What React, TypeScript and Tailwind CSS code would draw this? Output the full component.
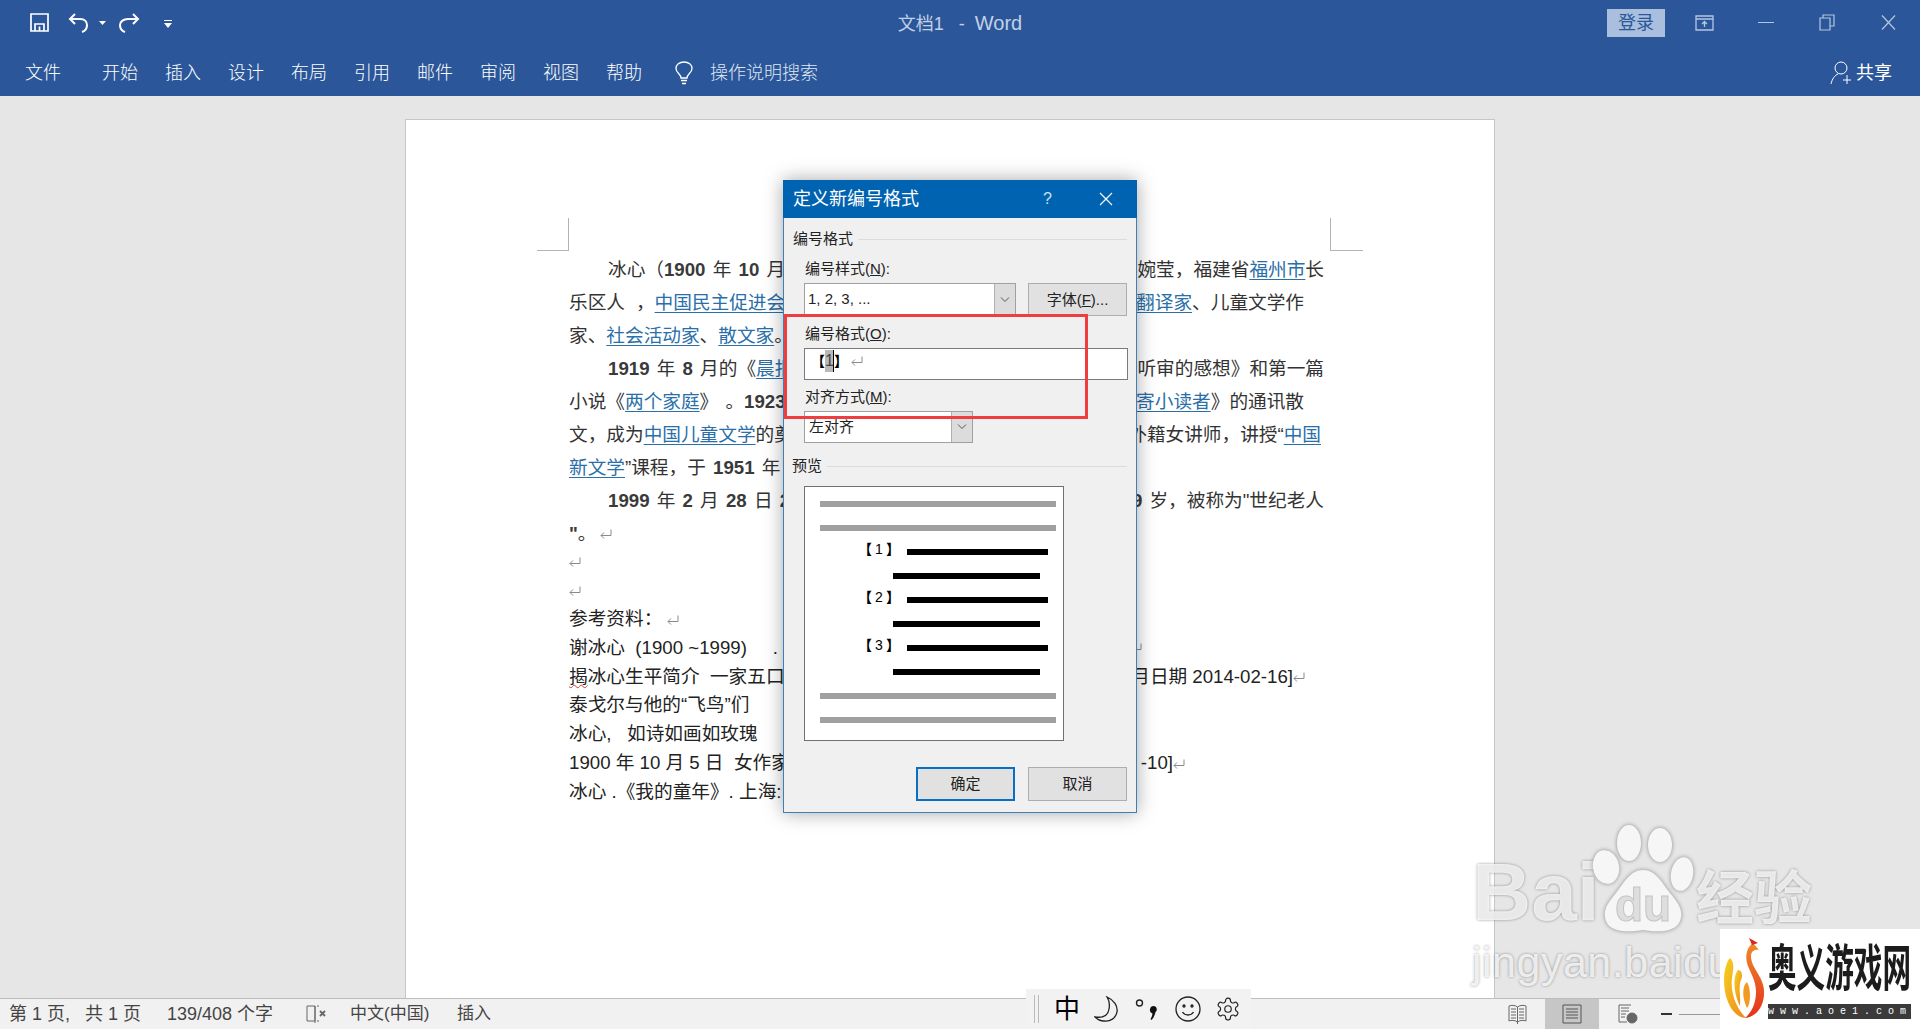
const tabs = ["开始", "插入", "设计", "布局", "引用", "邮件", "审阅", "视图", "帮助"];

function Ret({ className = "" }: { className?: string }) {
  return (
    <svg width="12" height="11" viewBox="0 0 12 11" fill="none" stroke="#8a8a8a" strokeWidth="1" className={`inline-block ${className}`}>
      <path d="M11 0.5V6.5H1M4 3.5L1 6.5L4 9.5" />
    </svg>
  );
}

function A({ children }: { children: string }) {
  return <span className="text-[#2a6fa8] underline underline-offset-[3px] decoration-1">{children}</span>;
}

function B({ children }: { children: string }) {
  return <span className="font-bold text-[#3a3a3a]">{children}</span>;
}

function Line({ left, right, indent, rightPad = "" }: { left: React.ReactNode; right?: React.ReactNode; indent?: boolean; rightPad?: string }) {
  return (
    <div className={`h-[33px] flex items-center justify-between whitespace-pre [word-spacing:2px] ${indent ? "pl-[39px]" : ""}`}>
      <span>{left}</span>
      {right && <span className={rightPad}>{right}</span>}
    </div>
  );
}

function RefLine({ left, right, rightPad = "" }: { left: React.ReactNode; right?: React.ReactNode; rightPad?: string }) {
  return (
    <div className="h-[28.8px] flex items-center justify-between whitespace-pre text-[#222]">
      <span>{left}</span>
      {right && <span className={rightPad}>{right}</span>}
    </div>
  );
}

function SelectBox({ text, width, pl }: { text: string; width: string; pl: string }) {
  return (
    <div className={`${width} flex bg-white border border-[#a0a0a0]`}>
      <span className={`flex-1 text-[15px] leading-[30px] text-[#222] ${pl}`}>{text}</span>
      <div className="w-[21px] bg-[#dcdcdc] border-l border-[#b0b0b0] flex items-center justify-center">
        <svg width="10" height="6" viewBox="0 0 10 6" fill="none" stroke="#555" strokeWidth="1">
          <path d="M1 0.5L5 4.5L9 0.5" />
        </svg>
      </div>
    </div>
  );
}

function GroupTitle({ text, mt, pl }: { text: string; mt: string; pl: string }) {
  return (
    <div className={`flex items-center gap-[5px] h-[18px] ${mt} ${pl} pr-[9px]`}>
      <span className="text-[15px] text-[#222]">{text}</span>
      <div className="flex-1 h-px bg-[#dcdcdc]" />
    </div>
  );
}

function Label({ mt, children }: { mt: string; children: React.ReactNode }) {
  return <div className={`h-[20px] leading-[20px] pl-[21px] text-[15px] text-[#222] ${mt}`}>{children}</div>;
}

function PreviewItem({ n }: { n: number }) {
  return (
    <>
      <div className="h-[6px] flex items-center ml-[53px]">
        <span className="w-[49px] flex text-[14px] text-black -mt-[6px] shrink-0">
          <span className="font-bold w-[14px]">【</span>
          <span className="w-[14px] text-center">{n}</span>
          <span className="font-bold w-[14px]">】</span>
        </span>
        <div className="w-[141px] h-[6px] bg-black" />
      </div>
      <div className="ml-[88px] w-[147px] h-[6px] bg-black" />
    </>
  );
}

function Dialog() {
  const gray = "ml-[15px] w-[236px] h-[6px] bg-[#a0a0a0]";
  return (
    <div className="absolute left-[783px] top-[180px] w-[354px] h-[633px] bg-[#f0f0f0] border border-[#3f7fb8] shadow-[0_0_18px_rgba(0,0,0,0.35)]">
      <div className="h-[38px] -mx-px -mt-px bg-[#0063b1] flex items-center text-white pl-[10px]">
        <span className="text-[18px] flex-1">定义新编号格式</span>
        <span className="text-[16px] mr-[47px] text-[#cfe0f0]">?</span>
        <svg width="14" height="14" viewBox="0 0 14 14" stroke="white" strokeWidth="1.2" className="mr-[24px]">
          <path d="M1 1L13 13M13 1L1 13" />
        </svg>
      </div>
      <GroupTitle text="编号格式" mt="mt-[12px]" pl="pl-[9px]" />
      <Label mt="mt-[11px]">编号样式(<u>N</u>):</Label>
      <div className="flex gap-[12px] ml-[20px] mt-[4px]">
        <SelectBox text="1, 2, 3, ..." width="w-[212px] h-[33px]" pl="pl-[3px]" />
        <div className="w-[99px] h-[33px] bg-[#e1e1e1] border border-[#adadad] text-center text-[15px] leading-[31px] text-[#222]">字体(<u>F</u>)...</div>
      </div>
      <Label mt="mt-[8px]">编号格式(<u>O</u>):</Label>
      <div className="ml-[20px] mt-[4px] w-[324px] h-[32px] bg-white border border-[#7a7a7a] flex pl-[6px] pt-[1px] whitespace-pre text-[14px] leading-[22px] text-black">
        <span className="font-bold w-[14px] h-[22px]">【</span>
        <span className="bg-[#b9b9b9] text-[#444] text-[16px] w-[9px] h-[22px] text-center border-r border-black overflow-hidden">1</span>
        <span className="font-bold w-[14px] h-[22px]">】</span>
        <Ret className="ml-[3px] mt-[6px]" />
      </div>
      <Label mt="mt-[7px]">对齐方式(<u>M</u>):</Label>
      <div className="ml-[20px] mt-[4px]">
        <SelectBox text="左对齐" width="w-[169px] h-[32px]" pl="pl-[4px]" />
      </div>
      <GroupTitle text="预览" mt="mt-[14px]" pl="pl-[8px]" />
      <div className="ml-[20px] mt-[11px] w-[260px] h-[255px] bg-white border border-[#707070] pt-[14px] flex flex-col gap-[18px]">
        <div className={gray} />
        <div className={gray} />
        <PreviewItem n={1} />
        <PreviewItem n={2} />
        <PreviewItem n={3} />
        <div className={gray} />
        <div className={gray} />
      </div>
      <div className="flex gap-[13px] ml-[132px] mt-[26px] text-[15px] text-[#222] text-center">
        <div className="w-[99px] h-[34px] bg-[#e1e1e1] border-2 border-[#0a6fc2] leading-[30px]">确定</div>
        <div className="w-[99px] h-[34px] bg-[#e1e1e1] border border-[#adadad] leading-[32px]">取消</div>
      </div>
    </div>
  );
}

function Watermark() {
  const glow = "text-white/80 [text-shadow:0_0_3px_rgba(0,0,0,0.4)]";
  return (
    <div className="absolute left-[1472px] top-[825px] w-[350px] pointer-events-none">
      <div className="flex items-end h-[108px]">
        <span className={`text-[82px] leading-[82px] font-bold w-[120px] ${glow}`}>Bai</span>
        <svg width="102" height="108" viewBox="0 0 102 108" className="drop-shadow-[0_0_2px_rgba(0,0,0,0.4)]">
          <g fill="#f6f6f6">
            <ellipse cx="37" cy="18" rx="12" ry="18" />
            <ellipse cx="68" cy="20" rx="12" ry="17" />
            <ellipse cx="14" cy="42" rx="13" ry="17" transform="rotate(-12 14 42)" />
            <ellipse cx="90" cy="49" rx="11" ry="17" transform="rotate(10 90 49)" />
            <path d="M51 45C38 45 32 58 24 68C16 78 10 85 14 96C18 106 32 108 51 105C70 108 84 106 88 96C92 85 86 78 78 68C70 58 64 45 51 45Z" />
          </g>
          <text x="51" y="96" textAnchor="middle" fontSize="46" fontWeight="700" fontFamily="Liberation Sans" fill="#dedede" stroke="#c4c4c4" strokeWidth="1">du</text>
        </svg>
        <span className={`ml-[2px] text-[58px] leading-[68px] font-bold ${glow}`}>经验</span>
      </div>
      <div className={`mt-[4px] text-[43px] leading-[50px] tracking-[0.5px] ${glow}`}>jingyan.baidu</div>
    </div>
  );
}

function SiteLogo() {
  return (
    <div className="absolute left-[1720px] top-[929px] w-[200px] h-[100px] bg-white flex pl-[3px] pt-[9px]">
      <svg width="42" height="82" viewBox="0 0 42 82" className="shrink-0">
        <defs>
          <linearGradient id="gold" x1="0" y1="0" x2="1" y2="1">
            <stop offset="0" stopColor="#f6d21e" />
            <stop offset="1" stopColor="#f0841c" />
          </linearGradient>
          <linearGradient id="flame" x1="0" y1="0" x2="0" y2="1">
            <stop offset="0" stopColor="#f08a2a" />
            <stop offset="1" stopColor="#e4301c" />
          </linearGradient>
        </defs>
        <path d="M7 20C0 28 -1 50 5 64C9 74 16 80 23 80C14 71 7 56 9 40C10 32 12 24 7 20Z" fill="url(#gold)" />
        <path d="M15 32C10 38 10 54 17 68C18 60 15 48 18 42C20 38 19 32 15 32Z" fill="url(#gold)" />
        <path d="M24 44C19 48 19 60 24 70C28 66 28 50 24 44Z" fill="#f29a22" />
        <path d="M30 5C24 9 22 17 24 25C26 33 33 41 33 54C33 66 28 75 22 80C34 79 42 67 41 52C40 38 28 30 28 18C28 13 32 11 36 12Z" fill="url(#flame)" />
        <path d="M26 0L35 5L29 7Z" fill="#d8281c" />
      </svg>
      <div className="ml-[3px] w-[143px]">
        <div className="h-[54px] mt-[3px] flex items-center">
          <span className="inline-block text-[28.6px] leading-[30px] font-bold text-[#1c1c1c] whitespace-pre scale-y-[1.75]">奥义游戏网</span>
        </div>
        <div className="mt-[9px] h-[15px] bg-[#3a3a3a] text-white text-[10px] leading-[15px] text-center tracking-[6px] font-['Liberation_Mono',monospace] whitespace-pre overflow-hidden">www.aoe1.com</div>
      </div>
    </div>
  );
}

function ImeBar() {
  return (
    <div className="absolute left-[1026px] top-[989px] w-[225px] h-[40px] bg-[#f2f2f2] flex items-center text-black">
      <div className="ml-[8px] w-[5px] h-[28px] border-x border-[#bbb]" />
      <span className="ml-[15px] text-[26px] leading-none w-[26px] text-center">中</span>
      <svg width="24" height="26" viewBox="0 0 24 26" fill="none" stroke="#222" strokeWidth="1.3" className="ml-[14px]">
        <path d="M13 1C20 4 24 10 23 16C22 22 16 26 10 25C6 25 3 23 1 21C8 22 14 20 15 13C16 8 15 4 13 1Z" />
      </svg>
      <svg width="24" height="28" viewBox="0 0 24 28" className="ml-[17px]">
        <circle cx="4.5" cy="8" r="3" fill="none" stroke="#222" strokeWidth="1.4" />
        <path d="M15 14.5a3.4 3.4 0 1 1 5.5 2.6C20 20 18.500 23 16.500 25L15.500 24C16.500 22.500 17.400 20.500 17.400 18.500A3.400 3.400 0 0 1 15 14.500Z" fill="#111" />
      </svg>
      <svg width="26" height="26" viewBox="0 0 26 26" fill="none" stroke="#222" strokeWidth="1.3" className="ml-[16px]">
        <circle cx="13" cy="13" r="12" />
        <circle cx="9" cy="10" r="1" fill="#222" />
        <circle cx="17" cy="10" r="1" fill="#222" />
        <path d="M7.500 16C10 20 16 20 18.500 16" />
      </svg>
      <svg width="26" height="26" viewBox="0 0 24 24" fill="none" stroke="#222" strokeWidth="1.1" className="ml-[14px]">
        <path d="M12.220 2h-.44a2 2 0 0 0-2 2v.18a2 2 0 0 1-1 1.730l-.43.250a2 2 0 0 1-2 0l-.15-.080a2 2 0 0 0-2.730.730l-.220.380a2 2 0 0 0 .730 2.730l.150.100a2 2 0 0 1 1 1.720v.510a2 2 0 0 1-1 1.740l-.150.090a2 2 0 0 0-.730 2.730l.220.380a2 2 0 0 0 2.730.730l.150-.080a2 2 0 0 1 2 0l.430.250a2 2 0 0 1 1 1.730V20a2 2 0 0 0 2 2h.440a2 2 0 0 0 2-2v-.180a2 2 0 0 1 1-1.730l.430-.250a2 2 0 0 1 2 0l.150.080a2 2 0 0 0 2.730-.730l.220-.390a2 2 0 0 0-.730-2.730l-.150-.080a2 2 0 0 1-1-1.740v-.500a2 2 0 0 1 1-1.740l.150-.090a2 2 0 0 0 .730-2.730l-.220-.380a2 2 0 0 0-2.730-.730l-.150.080a2 2 0 0 1-2 0l-.430-.250a2 2 0 0 1-1-1.730V4a2 2 0 0 0-2-2z" />
        <circle cx="12" cy="12" r="3" />
      </svg>
    </div>
  );
}

function StatusBar() {
  const book = "M9.500 3C7 1 3 1 1 2V17C3 16 7 16 9.500 18C12 16 16 16 18 17V2C16 1 12 1 9.500 3ZM9.500 3V20M3 5H8M3 8H8M3 11H8M3 14H8M11 5H16M11 8H16M11 11H16M11 14H16";
  return (
    <div className="h-[31px] shrink-0 bg-[#f1f1f1] border-t border-[#bdbdbd] flex items-center text-[17px] text-[#444] whitespace-pre">
      <span className="ml-[9px] w-[158px] text-[18px]">第 1 页,   共 1 页</span>
      <span className="w-[139px] text-[18px]">139/408 个字</span>
      <svg width="20" height="20" viewBox="0 0 20 20" fill="none" stroke="#666" strokeWidth="1">
        <path d="M9 2H1V17H9V2ZM9 2V19M11 2H13M11 17H13" />
        <path d="M14 7L19 12M19 7L14 12" strokeWidth="1.800" />
      </svg>
      <span className="ml-[24px] w-[107px]">中文(中国)</span>
      <span className="w-[34px]">插入</span>
      <svg width="20" height="21" viewBox="0 0 20 21" fill="none" stroke="#666" strokeWidth="1" className="ml-[1017px]">
        <path d={book} />
      </svg>
      <div className="ml-[17px] w-[54px] h-[30px] bg-[#c6c6c6] flex items-center justify-center">
        <svg width="20" height="20" viewBox="0 0 20 20" fill="none" stroke="#555" strokeWidth="1">
          <path d="M1 1H19V19H1ZM4 5H16M4 8H16M4 11H16M4 14H16" />
        </svg>
      </div>
      <svg width="20" height="20" viewBox="0 0 20 20" fill="none" stroke="#666" strokeWidth="1" className="ml-[19px]">
        <path d="M13 1H1V18H9M3 4H11M3 7H11M3 10H8M3 13H7" />
        <circle cx="14" cy="14" r="5" fill="#666" />
      </svg>
      <div className="ml-[23px] w-[11px] h-[2px] bg-[#333]" />
      <div className="ml-[7px] w-[60px] h-px bg-[#999]" />
    </div>
  );
}

export default function App() {
  const win = "#b4c6e0";
  return (
    <div className="relative w-[1920px] h-[1029px] overflow-hidden flex flex-col bg-[#e6e6e6] font-['Liberation_Sans','Noto_Sans_CJK_SC',sans-serif]">
      {/* Title bar and tabs */}
      <header className="h-[96px] shrink-0 bg-[#2b579a] text-white">
        <div className="h-[47px] grid grid-cols-[1fr_auto_1fr] items-center">
          <div className="flex items-center pl-[30px] -mt-[2px]">
            <svg width="19" height="19" viewBox="0 0 19 19" fill="none" stroke="white" strokeWidth="1.700">
              <path d="M1 1H18V18H1ZM5 18V11H14V18M9.500 13.500V18" />
            </svg>
            <svg width="21" height="20" viewBox="0 0 21 20" fill="none" stroke="white" strokeWidth="2" className="ml-[19px]">
              <path d="M7 1L2 6L7 11M2 6H12C17 6 19 9 19 12C19 15 17 18 14 19" />
            </svg>
            <svg width="7" height="4" viewBox="0 0 7 4" fill="white" className="ml-[10px]">
              <path d="M0 0H7L3.500 4Z" />
            </svg>
            <svg width="23" height="20" viewBox="0 0 23 20" fill="none" stroke="white" strokeWidth="2" className="ml-[11px]">
              <path d="M16 1L21 6L16 11M21 6H11C6 6 3 9 3 12C3 15 5 18 8 19" />
            </svg>
            <svg width="8" height="8" viewBox="0 0 8 8" fill="white" className="ml-[24px] mt-[3px]">
              <path d="M0 0H8V1H0ZM0 3H8L4 8Z" />
            </svg>
          </div>
          <div className="text-[18px] text-[#c3d0e6] whitespace-pre -mt-[1px]">文档1   -  <span className="text-[20px]">Word</span></div>
          <div className="flex items-center justify-end -mt-[2px]">
            <div className="w-[58px] h-[28px] bg-[#a9bfdd] text-[#2b579a] text-[18px] leading-[28px] text-center">登录</div>
            <svg width="19" height="16" viewBox="0 0 19 16" fill="none" stroke={win} strokeWidth="1.300" className="ml-[30px]">
              <path d="M1 1H18V15H1ZM1 4H18M9.500 12V6.500M7 9L9.500 6.500L12 9" />
            </svg>
            <div className="ml-[44px] w-[16px] h-px bg-[#b4c6e0]" />
            <svg width="16" height="17" viewBox="0 0 16 17" fill="none" stroke={win} strokeWidth="1.200" className="ml-[45px]">
              <path d="M4 4V1H15V12H11M1 4H11V16H1Z" />
            </svg>
            <svg width="15" height="15" viewBox="0 0 15 15" fill="none" stroke={win} strokeWidth="1.200" className="ml-[46px] mr-[24px]">
              <path d="M1 0.500L14 14.500M14 0.500L1 14.500" />
            </svg>
          </div>
        </div>
        <div className="h-[49px] flex items-center pt-[3px] text-[18px] whitespace-pre font-light">
          <span className="ml-[25px] w-[77px]">文件</span>
          <div className="flex gap-[27px]">
            {tabs.map((t) => (
              <span key={t} className="w-[36px]">{t}</span>
            ))}
          </div>
          <svg width="18" height="24" viewBox="0 0 18 24" fill="none" stroke="white" strokeWidth="1.300" className="ml-[33px]">
            <path d="M6 17C6 13 1 12 1 7.500C1 3.500 4.500 1 9 1C13.500 1 17 3.500 17 7.500C17 12 12 13 12 17ZM6 19.500H12M7 22.500H11" />
          </svg>
          <span className="ml-[17px] text-[#dfe6f2]">操作说明搜索</span>
          <div className="ml-auto mr-[28px] flex items-center gap-[4px]">
            <svg width="22" height="24" viewBox="0 0 22 24" fill="none" stroke="white" strokeWidth="1">
              <circle cx="11" cy="7" r="6" />
              <path d="M8 13C5 14 2 18 1 23M17 14V23M13 19H21" />
            </svg>
            <span className="font-normal">共享</span>
          </div>
        </div>
      </header>

      {/* Document canvas */}
      <main className="flex-1 min-h-0 flex justify-center pt-[23px] pr-[20px]">
        <div className="relative w-[1090px] bg-white border-x border-t border-[#c6c6c6] pl-[163px] pr-[170px] pt-[133px] text-[18.67px] text-[#333]">
          <div className="absolute left-[131px] top-[98px] w-[32px] h-[33px] border-r border-b border-[#b4b4b4]" />
          <div className="absolute left-[924px] top-[98px] w-[33px] h-[33px] border-l border-b border-[#b4b4b4]" />

          <Line indent left={<>冰心（<B>1900</B> 年 <B>10</B> 月</>} right={<>婉莹，福建省<A>福州市</A>长</>} />
          <Line left={<>乐区人 {"\u2009"}，<A>中国民主促进会</A></>} right={<><A>翻译家</A>、儿童文学作</>} rightPad="pr-[20px]" />
          <Line left={<>家、<A>社会活动家</A>、<A>散文家</A>。</>} />
          <Line indent left={<><B>1919</B> 年 <B>8</B> 月的《<A>晨报</A></>} right={<>听审的感想》和第一篇</>} />
          <Line left={<>小说《<A>两个家庭</A>》 。<B>1923</B></>} right={<><A>寄小读者</A>》的通讯散</>} rightPad="pr-[20px]" />
          <Line left={<>文，成为<A>中国儿童文学</A>的奠</>} right={<>外籍女讲师，讲授“<A>中国</A></>} rightPad="pr-[3px]" />
          <Line left={<><A>新文学</A>”课程，于 <B>1951</B> 年</>} />
          <Line indent left={<><B>1999</B> 年 <B>2</B> 月 <B>28</B> 日 <B>2</B></>} right={<><B>9</B> 岁，被称为"世纪老人</>} />
          <Line left={<><B>"</B>。<Ret className="ml-[3px]" /></>} />

          <div className="-mt-[3px]">
            <RefLine left={<Ret />} />
            <RefLine left={<Ret />} />
            <RefLine left={<>参考资料： <Ret /></>} />
            <RefLine left={<>谢冰心  (1900 ~1999)     .</>} right={<Ret />} rightPad="pr-[182px]" />
            <RefLine
              left={<><span className="underline decoration-wavy decoration-[#d04040] decoration-1">揭</span>冰心生平简介  一家五口</>}
              right={<>月日期 2014-02-16]<Ret /></>}
              rightPad="pr-[19px]"
            />
            <RefLine left={<>泰戈尔与他的“飞鸟”们</>} />
            <RefLine left={<>冰心,   如诗如画如玫瑰</>} />
            <RefLine left={<>1900 年 10 月 5 日  女作家</>} right={<>-10]<Ret /></>} rightPad="pr-[139px]" />
            <RefLine left={<>冰心 .《我的童年》. 上海:</>} />
          </div>
        </div>
      </main>

      <StatusBar />
      <Watermark />
      <Dialog />
      {/* Red annotation frame */}
      <div className="absolute left-[784px] top-[314px] w-[304px] h-[105px] border-[3px] border-[#ee3e40]" />
      <ImeBar />
      <SiteLogo />
    </div>
  );
}
